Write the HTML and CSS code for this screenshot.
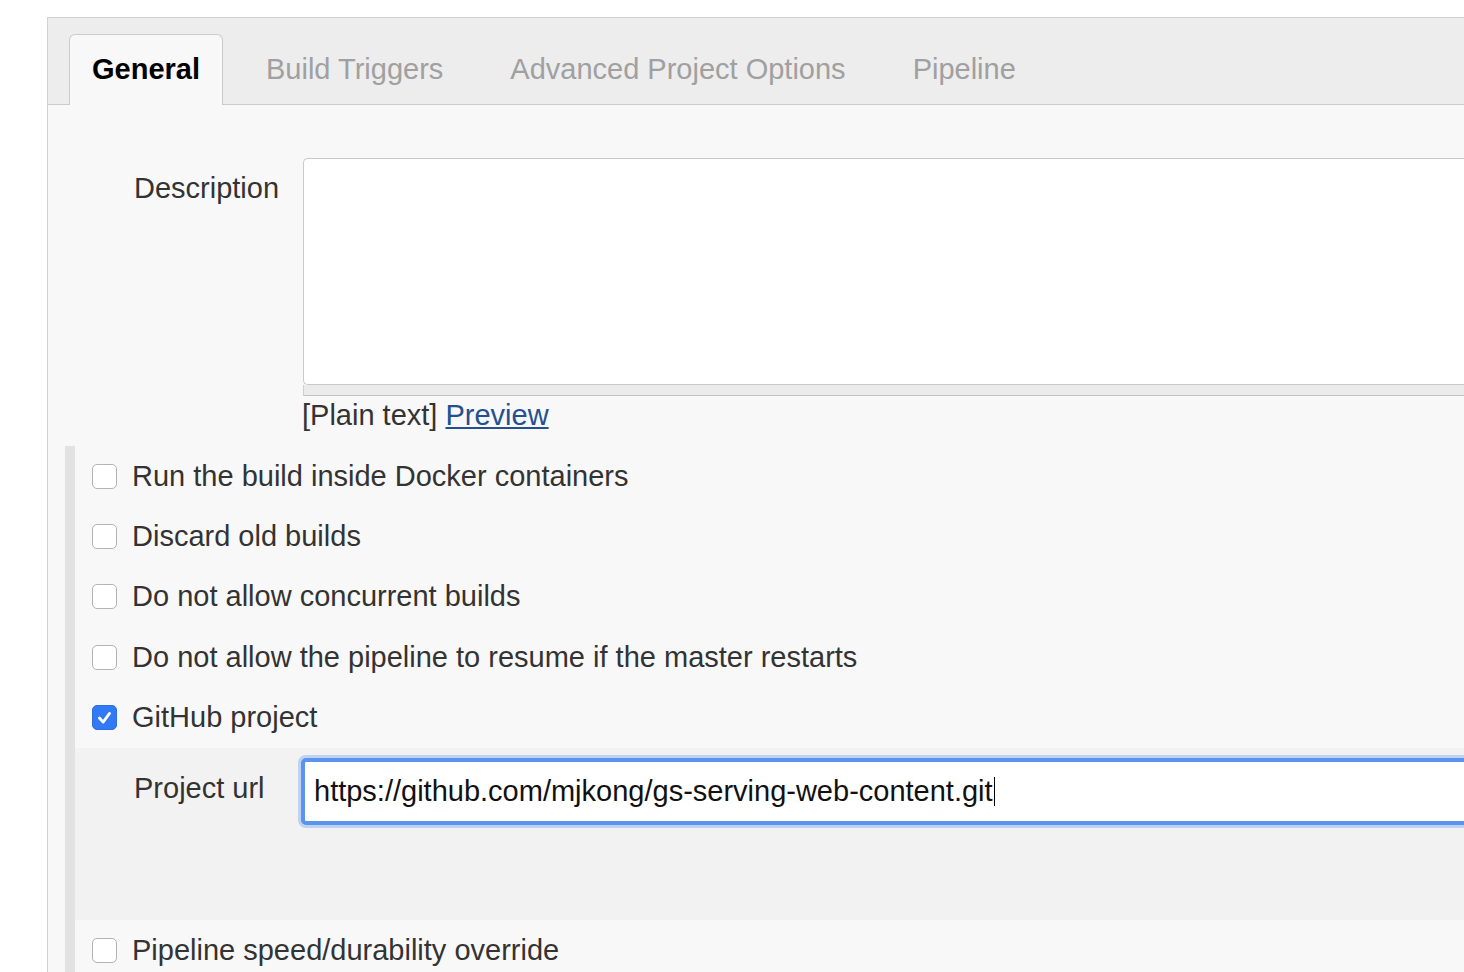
FILE: index.html
```html
<!DOCTYPE html>
<html lang="en">
<head>
<meta charset="utf-8">
<title>Pipeline configuration</title>
<link rel="stylesheet" href="styles.css">
</head>
<body>
<div class="panel">
  <div class="tabbar">
    <div class="tab active">General</div>
    <div class="tab">Build Triggers</div>
    <div class="tab">Advanced Project Options</div>
    <div class="tab">Pipeline</div>
  </div>
  <div class="content">
    <div class="desc-row">
      <div class="label">Description</div>
      <div class="field">
        <div class="textarea"></div>
        <div class="handle"></div>
        <div class="hint">[Plain text] <a class="link" href="#">Preview</a></div>
      </div>
    </div>
    <div class="options">
      <div class="opt"><span class="cb"></span><span class="opt-text">Run the build inside Docker containers</span></div>
      <div class="opt"><span class="cb"></span><span class="opt-text">Discard old builds</span></div>
      <div class="opt"><span class="cb"></span><span class="opt-text">Do not allow concurrent builds</span></div>
      <div class="opt"><span class="cb"></span><span class="opt-text">Do not allow the pipeline to resume if the master restarts</span></div>
      <div class="opt"><span class="cb checked"><svg viewBox="0 0 25 25" width="25" height="25"><polyline points="7,13 11,17.5 18,8" fill="none" stroke="#fff" stroke-width="3" stroke-linecap="round" stroke-linejoin="round"/></svg></span><span class="opt-text">GitHub project</span></div>
      <div class="nested">
        <div class="nested-row">
          <div class="label nested-label">Project url</div>
          <div class="input">https://github.com/mjkong/gs-serving-web-content.git<span class="caret"></span></div>
        </div>
      </div>
      <div class="opt last"><span class="cb"></span><span class="opt-text">Pipeline speed/durability override</span></div>
    </div>
  </div>
</div>
</body>
</html>
```

FILE: styles.css
```css
html, body {
  margin: 0;
  padding: 0;
  background: #ffffff;
  overflow: hidden;
  width: 1464px;
  height: 972px;
}

body {
  font-family: "Liberation Sans", Arial, sans-serif;
  font-size: 29px;
  color: #333333;
}

.panel {
  margin: 17px 0 0 47px;
  width: 1460px;
  border-top: 1px solid #d2d2d2;
  border-left: 1px solid #d2d2d2;
  background: #f8f8f8;
  height: 1000px;
}

.tabbar {
  height: 86px;
  background: #ededed;
  border-bottom: 1px solid #cccccc;
  display: flex;
  align-items: flex-end;
  padding-left: 21px;
  gap: 19px;
}

.tab {
  height: 68px;
  line-height: 68px;
  padding: 0 23px 2px;
  margin-bottom: -1px;
  border: 1px solid transparent;
  border-bottom: none;
  border-radius: 6px 6px 0 0;
  color: #a0a0a0;
  white-space: nowrap;
}

.tab.active {
  background: #f8f8f8;
  border-color: #cccccc;
  color: #000000;
  font-weight: bold;
  padding: 0 22px 2px;
}

.content {
  padding-top: 53px;
}

.desc-row {
  display: flex;
  padding-left: 86px;
}

.label {
  width: 169px;
  flex: none;
  line-height: 32px;
  padding-top: 14px;
  color: #333333;
}

.field {
  flex: 1;
}

.textarea {
  height: 225px;
  background: #ffffff;
  border: 1px solid #c9c9c9;
  border-right: none;
  border-radius: 5px 0 0 5px;
}

.handle {
  height: 10px;
  background: #ebebeb;
  border-left: 1px solid #cfcfcf;
  border-bottom: 1px solid #c2c2c2;
}

.hint {
  margin-top: 3px;
  line-height: 32px;
  color: #333333;
  margin-left: -1px;
}

.link {
  color: #24508f;
  text-decoration: underline;
}

.options {
  margin-top: 15px;
  margin-left: 17px;
  border-left: 10px solid #e2e2e2;
}

.opt {
  height: 60.4px;
  display: flex;
  align-items: center;
  padding-left: 17px;
}

.opt.last {
  height: 62px;
}

.cb {
  width: 25px;
  height: 25px;
  box-sizing: border-box;
  border: 1px solid #b3b3b3;
  border-radius: 5px;
  background: #ffffff;
  margin-right: 15px;
  flex: none;
  display: flex;
  align-items: center;
  justify-content: center;
}

.cb.checked {
  background: #3179f5;
  border-color: #2d6fe0;
}

.cb svg {
  display: block;
}

.opt-text {
  color: #333333;
  white-space: nowrap;
}

.nested {
  height: 172px;
  box-sizing: border-box;
  background: #f2f2f2;
  padding: 10px 0 0 59px;
}

.nested-row {
  display: flex;
  align-items: flex-start;
}

.nested-label {
  width: 167px;
  padding-top: 14px;
}

.input {
  flex: none;
  width: 1400px;
  height: 67px;
  box-sizing: border-box;
  background: #ffffff;
  border: 4px solid #5a94ee;
  border-radius: 5px;
  box-shadow: 0 0 0 3px rgba(140, 178, 242, 0.5);
  padding-left: 9px;
  line-height: 59px;
  color: #111111;
  white-space: nowrap;
}

.caret {
  display: inline-block;
  width: 1.5px;
  height: 29px;
  background: #000000;
  vertical-align: middle;
  margin-left: 1px;
  position: relative;
  top: -2px;
}
```
